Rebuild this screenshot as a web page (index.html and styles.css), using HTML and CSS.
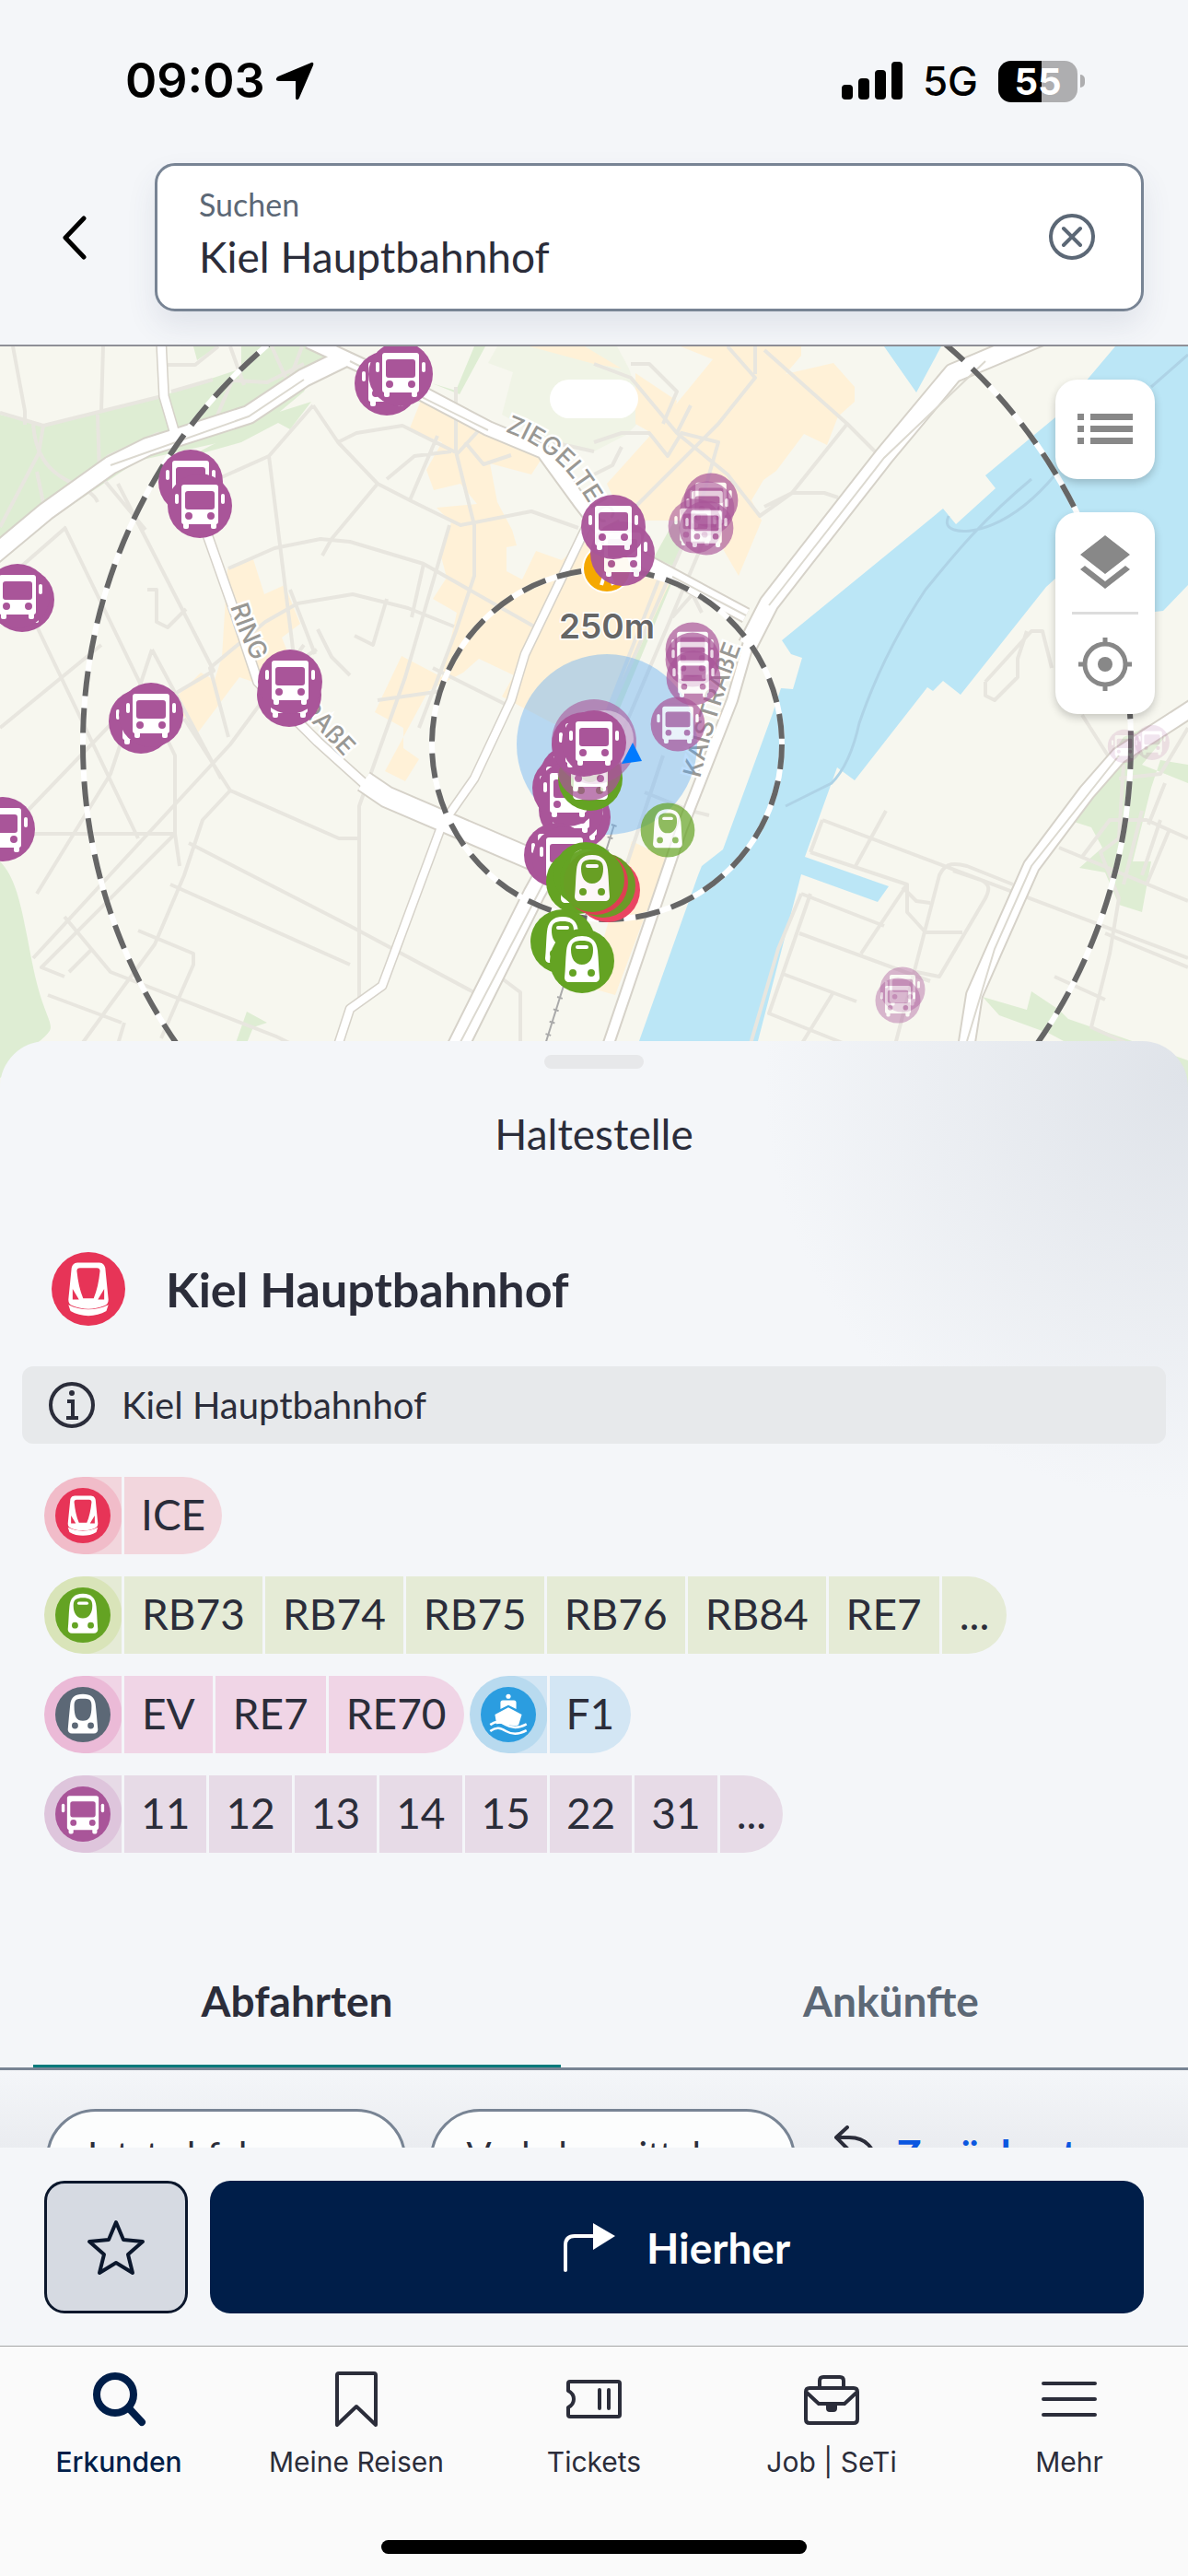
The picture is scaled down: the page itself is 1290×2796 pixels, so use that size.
FILE: index.html
```html
<!DOCTYPE html>
<html lang="de">
<head>
    <meta charset="UTF-8">
    <meta name="viewport" content="width=device-width, initial-scale=1.0">
    <title>Kiel Hauptbahnhof</title>
    <link rel="stylesheet" href="styles.css">
</head>
<body>
    <!-- Shared transport icons, centred on 0,0 with a radius of 35 -->
    <svg class="defs" aria-hidden="true">
        <defs>
            <g id="glyph-bus">
                <path fill-rule="evenodd" d="M-17-23h34a3 3 0 0 1 3 3v37a3 3 0 0 1-2 3v3a2 2 0 0 1-2 2h-2a2 2 0 0 1-2-2v-3h-24v3a2 2 0 0 1-2 2h-2a2 2 0 0 1-2-2v-3a3 3 0 0 1-2-3v-37a3 3 0 0 1 3-3zM-13-16a3 3 0 0 0-3 3v14a3 3 0 0 0 3 3h26a3 3 0 0 0 3-3v-14a3 3 0 0 0-3-3zM-12 7a4 4 0 1 0 0 8a4 4 0 0 0 0-8zM12 7a4 4 0 1 0 0 8a4 4 0 0 0 0-8z"/>
                <rect x="-27" y="-13" width="4" height="11" rx="2"/>
                <rect x="23" y="-13" width="4" height="11" rx="2"/>
            </g>
            <g id="glyph-train">
                <path fill-rule="evenodd" d="M0-27c11 0 16 6 17 16c1 9 1 20 2 29c0 3-2 5-5 5h-28c-3 0-5-2-5-5c1-9 1-20 2-29c1-10 6-16 17-16zM0-22c-8 0-12 2-12 10c0 9 4 16 12 16s12-7 12-16c0-8-4-10-12-10zM-10 9a4 4 0 1 0 0 8a4 4 0 0 0 0-8zM10 9a4 4 0 1 0 0 8a4 4 0 0 0 0-8z"/>
                <rect x="-7" y="-17" width="14" height="4" rx="2"/>
            </g>
            <g id="glyph-rail">
                <path fill-rule="evenodd" d="M0-26c10 0 15 4 16 13c1 9 2 21 3 32c0 3-2 5-5 5h-28c-3 0-5-2-5-5c1-11 2-23 3-32c1-9 6-13 16-13zM0-20c-9 0-11 2-11 9c0 14 3 19 11 19s11-5 11-19c0-7-2-9-11-9zM-10 10a4 4 0 1 0 0 8a4 4 0 0 0 0-8zM10 10a4 4 0 1 0 0 8a4 4 0 0 0 0-8z"/>
            </g>
            <g id="glyph-ice">
                <path fill-rule="evenodd" d="M-9-25h18c4 0 6 1 7 5l3 30c0 3-1 5-4 6c-10 4-20 4-30 0c-3-1-4-3-4-6l3-30c1-4 3-5 7-5zM-8-20c-2 0-3 1-3 3c1 10 3 19 6 26h10c3-7 5-16 6-26c0-2-1-3-3-3zM-15 0v10h6zM15 0v10h-6z"/>
                <path d="M-19 15c12 6 26 6 38 0l-2 6c-10 6-24 6-34 0z"/>
            </g>
            <g id="glyph-ferry">
                <circle cx="0" cy="-23" r="3"/>
                <path d="M-10-7v-8a3 3 0 0 1 3-3h14a3 3 0 0 1 3 3v8l-10-5zM0-9l17 9l-4 13c-9 4-18-4-28-1l-2-12z"/>
                <path d="M-23 13c8-6 13-4 20 0s15 5 26-1M-23 21c8-6 13-4 20 0s15 5 26-1" fill="none" stroke="#fff" stroke-width="3"/>
            </g>
            <g id="m-bus"><circle r="35" fill="#a95599"/><use href="#glyph-bus" fill="#fff"/></g>
            <g id="m-train"><circle r="35" fill="#64a323"/><use href="#glyph-train" fill="#fff"/></g>
            <g id="m-rail"><circle r="35" fill="#5c6876"/><use href="#glyph-rail" fill="#fff"/></g>
            <g id="m-ice"><circle r="35" fill="#e73457"/><use href="#glyph-ice" fill="#fff"/></g>
            <g id="m-ferry"><circle r="35" fill="#2b9de0"/><use href="#glyph-ferry" fill="#fff"/></g>
        </defs>
    </svg>

    <div class="app">
        <header class="header">
            <div class="status">
                <div class="status-left">
                    <span class="time">09:03</span>
                    <svg width="44" height="44" viewBox="0 0 44 44"><path d="M40 2c2-1 3 1 2 3L27 40c-1 3-4 3-4 0V22H5c-4 0-4-3-1-5z"/></svg>
                </div>
                <div class="status-right">
                    <svg width="66" height="42" viewBox="0 0 66 42">
                        <rect x="0" y="25" width="12" height="16" rx="4"/>
                        <rect x="18" y="18" width="12" height="23" rx="4"/>
                        <rect x="36" y="9" width="12" height="32" rx="4"/>
                        <rect x="54" y="0" width="12" height="41" rx="4"/>
                    </svg>
                    <span class="network">5G</span>
                    <span class="battery">55</span>
                </div>
            </div>
            <form class="search-row">
                <button class="back" type="button" aria-label="Zurück">
                    <svg width="30" height="50" viewBox="0 0 30 50"><path d="M25 4L5 25l20 21" fill="none" stroke="#000" stroke-width="5" stroke-linecap="round" stroke-linejoin="round"/></svg>
                </button>
                <div class="search-box">
                    <div class="search-field">
                        <label for="search">Suchen</label>
                        <input id="search" type="text" value="Kiel Hauptbahnhof">
                    </div>
                    <button class="clear" type="button" aria-label="Löschen">
                        <svg width="52" height="52" viewBox="0 0 52 52" fill="none" stroke="#5c6876" stroke-width="4" stroke-linecap="round"><circle cx="26" cy="26" r="23"/><path d="M17 17l18 18M35 17L17 35"/></svg>
                    </button>
                </div>
            </form>
        </header>

        <main class="map">
            <svg class="map-canvas" viewBox="0 376 1290 804" preserveAspectRatio="xMidYMin slice">
                <rect x="0" y="376" width="1290" height="804" fill="#f7f7ef"/>

                <!-- parks -->
                <g fill="#deedd3">
                    <path d="M0 450L47 462L176 430L232 410L262 400V376H370L345 395L330 425L300 450L240 480L150 500L0 600z"/>
                    <path d="M338 436L315 466L302 459L262 480L205 496L240 478L300 448zM210 376h26l-22 15zM515 376h12l-28 52l-30-12l26 8zM773 485l30 18l-30 50l-25-5zM735 560l12 10l-15 45l-22-10zM725 625l6 4L660 800l-8-4z"/>
                    <path d="M0 935c20 20 25 60 35 110s20 60 20 70s-25 20-20 30L0 1170zM268 1098l22 12l-15 5l-7 17h-12z"/>
                    <path d="M1290 770L1240 830L1290 850v-20l-30-5l-10 30l-20 80h20l-10 55l-25-8l-15-35l-28-5l25-22l-12-22l-25-8l60-90zM1067 1082l48 14l5-20l30 20l10 10l130 45v30L1180 1130h-25l-15-8l-55-20z"/>
                </g>
                <path d="M530 394L557 404L545 450L600 480L645 490L680 472L700 452L683 400L670 376H540z" fill="#f0f4e6"/>

                <!-- built-up blocks -->
                <g fill="#fff1d7">
                    <path d="M457 435L444 467L480 480L463 510L471 532L500 525L518 547L474 551L490 567L478 600L485 627L470 650L496 665L480 735L436 712L407 773L438 790V812L455 824L440 848L418 837L465 750L503 730L520 715L558 733L545 756L600 785L650 800L727 633L690 600L640 580L610 608L582 598L567 629L550 620V594L561 592L556 575L540 545L532 503L577 515L590 495L550 478L495 450z"/>
                    <path d="M575 376h60l40 24l-30-5zM752 376h118v10l-17 20l52-12l23 26v16l-18 16l-12 31l-25-12l-30 40l-14 10l-13 22l11 22l-25 60l-35-60l-90 0l-18-40l45-50l25-30l45-55l-50-20l-4-28l20 6zM690 405l45 30l-10 45l-35-20z"/>
                    <path d="M247 617l28-10l12 38l22-10l17 42l-20 15l14 35l-25 20l-35-12l-45 60l-22-25v-15l25-25l15 8l8-25z"/>
                    <path d="M686 913l38 18L668 1080l-28-8zM620 690l50 10l-30 60l-20-20z"/>
                </g>

                <!-- water -->
                <path fill="#bbe6f6" d="M960 376h62l-27 50zM1211 376h79v259l-27 28l-9 1l-50-40l-58 4l-10 9l-93 117l-19-15l-11 11l-6-4L928 847l-19-14l-35 97l91 32l-12 17l-83-30L810 1180H680L694 1130L758 950l4-10l23-18l53-145l10-30l13 1l10-34l-12-4l-10-15L1024 552l14 17l43-39l-11-14l76-63z"/>
                <path d="M1290 385l-40 35M1146 515c-50 60-95 65-110 60c-10-3-8-10-6-15M1120 520c-60 50-90 90-115 120c-40 60-60 110-72 145c-10 45-25 60-30 65l-50 25" fill="none" stroke="#aed3e6" stroke-width="3"/>

                <!-- minor streets -->
                <g class="street">
                    <path d="M14 376l13 70v15M112 376l-2 70M0 448l47 14L176 430M182 396h30l25-20M250 376l15 42M106 450l2 65l50 60M47 462l-5 30l-42 80M36 460c5 70 60 60 70 85M50 560l-10-48M48 555l70-60l55-25M186 425l45-13M230 465l22-52l38 2l40-20M295 376l18 40l-15 22M313 416l15-40"/>
                    <path d="M128 525L232 728L178 760M70 572L190 820V905L45 1050L70 1060M40 680L150 910M72 572L0 635M340 440L292 495L320 720L344 705M292 495L225 525M340 440L367 480L410 525L445 543L500 570L577 555L628 573M367 480l20-10l50-8l60 30l23-25M445 543l30-70M410 525l-50 60l-10 18M248 617l50-22l50-10l32 3L460 612L580 680M488 570L440 735L390 875V1083M460 612L447 670M248 800l-20-75l60-50l35-20l60-10l60 15l50 20M315 640l27 70M420 650l-15 50l-20-10M160 640h10v35l12 6l20-20M345 683l15 30l20 20M490 490l-40 5l-30 25M495 420v70l20 80v55l-20 60L455 790M470 725l80 40M600 480L645 490M505 480l20 24l30-10"/>
                    <path d="M36 1040L250 808L330 700M0 790L110 700M30 880L155 750M40 970L120 840L165 705M165 705L240 845M200 780L250 858L368 910h22M250 858L220 890L200 950L168 1025L120 1090L55 1180M205 915L380 1005L520 1080M185 960L380 1047M150 1010l60 25v12l-35 80M70 995l50 60l180 70l50 25M52 1080l80 30M135 1110l-12 40M75 1055L100 1030M545 1062l20 15v60M195 940L190 905L0 905M410 760L480 750"/>
                    <path d="M645 395l40 15L735 470L790 515L825 560L860 535L920 460L830 380M790 376L820 410L780 460L690 550L645 640M685 395h20l30 30l-15 35M735 470l15-30M920 460l30 30M830 550l30-15h35l15 5M820 376v30M645 480l30-10h30l20 25l15-25l40 10l-20 70L650 800M715 630L625 860M780 550L665 820M730 670l22-25l10 20M645 515l20-10l10-20"/>
                    <path d="M700 860l50 20M750 880l20 5M720 820l-60 180M893 890L1290 1040M893 890L880 925M880 925L985 960L935 1035M962 880l-33 60M1100 960L1050 940c-20-5-25 0-30 10L960 1180M1035 945l30 10c10 5 10 10 5 20l-50 85l-25-5M870 970l90 35M880 970L835 1100L960 1150M868 1013L1010 1065M905 1077L860 1150M850 1057l80 30M870 970l-25 60l-35 120M985 960v30l20 22h40M980 963l15 15l15 2M1070 740l50-55h12l10 40M1070 740v15l10 5l25-25v-20l10-30M1150 920L1290 978M1175 930l30-40h40l45 20M1220 830l-5 80l-20 15l20 50l-10 60l-20 80l100 45M1240 880L1220 960M1270 900L1245 960M1260 890l-20 60M1200 1013L1290 1050M1145 1060l55 25M1265 850l-18 45M1175 776l35 55M1290 790l-30 50l-45 5"/>
                </g>

                <!-- main roads -->
                <g class="road-case">
                    <path d="M-10 605L50 555L120 505L160 485L270 450L330 410L375 388" stroke-width="22"/>
                    <path d="M335 370L378 390L460 428L530 465L590 490L630 545L665 590L810 668" stroke-width="18"/>
                    <path d="M175 370L178 430L192 478M225 580L255 665L280 740L345 805L395 850" stroke-width="12"/>
                    <path d="M395 848L420 865L590 938" stroke-width="25"/>
                    <path d="M640 565L570 710L555 760L515 845L480 895L415 1070L380 1095L362 1150" stroke-width="11"/>
                    <path d="M1130 365L1035 405L960 495L870 610L835 655L812 700" stroke-width="23"/>
                    <path d="M815 690L795 760L740 900L655 1150" stroke-width="14"/>
                    <path d="M605 925L580 970L485 1160" stroke-width="25"/>
                    <path d="M1300 765L1215 820L1180 860L1120 940L1080 1030L1058 1080L1047 1150" stroke-width="20"/>
                </g>
                <g class="road">
                    <path d="M-10 605L50 555L120 505L160 485L270 450L330 410L375 388" stroke-width="18"/>
                    <path d="M335 370L378 390L460 428L530 465L590 490L630 545L665 590L810 668" stroke-width="14"/>
                    <path d="M175 370L178 430L192 478M225 580L255 665L280 740L345 805L395 850" stroke-width="9"/>
                    <path d="M395 848L420 865L590 938" stroke-width="21"/>
                    <path d="M640 565L570 710L555 760L515 845L480 895L415 1070L380 1095L362 1150" stroke-width="8"/>
                    <path d="M1130 365L1035 405L960 495L870 610L835 655L812 700" stroke-width="19"/>
                    <path d="M815 690L795 760L740 900L655 1150" stroke-width="10"/>
                    <path d="M605 925L580 970L485 1160" stroke-width="21"/>
                    <path d="M1300 765L1215 820L1180 860L1120 940L1080 1030L1058 1080L1047 1150" stroke-width="16"/>
                </g>
                <g class="road-mid">
                    <path d="M120 505L270 452L330 412M380 392L530 467M730 626L810 668M1070 392L960 497L835 657M600 940L490 1150M1215 820L1120 940L1080 1030L1050 1130"/>
                </g>
                <path d="M667 895L590 1140" fill="none" stroke="#aaa" stroke-width="2"/>
                <path d="M667 895L590 1140" fill="none" stroke="#aaa" stroke-width="6" stroke-dasharray="2 12"/>

                <!-- street names -->
                <path id="p-ziegel" d="M548 468Q596 486 620 518T668 600" fill="none"/>
                <path id="p-ring" d="M250 658Q270 722 300 748T374 822" fill="none"/>
                <path id="p-kai" d="M760 845Q786 740 826 650" fill="none"/>
                <g class="street-name">
                    <text><textPath href="#p-ziegel">ZIEGELTEICH</textPath></text>
                    <text><textPath href="#p-ring">RING</textPath></text>
                    <text text-anchor="end"><textPath href="#p-ring" startOffset="100%">STRAßE</textPath></text>
                    <text><textPath href="#p-kai">KAISTRAßE</textPath></text>
                </g>

                <!-- own position and walking radius -->
                <circle cx="659" cy="808" r="98" fill="#5aa9f6" fill-opacity=".4"/>
                <g fill="none">
                    <circle cx="659" cy="808" r="190" stroke="#fff" stroke-width="6"/>
                    <circle cx="659" cy="808" r="569" stroke="#fff" stroke-width="6"/>
                    <circle cx="659" cy="808" r="190" stroke="#666" stroke-width="6" stroke-dasharray="27 13"/>
                    <circle cx="659" cy="808" r="569" stroke="#666" stroke-width="6" stroke-dasharray="27 13"/>
                </g>
                <text x="659" y="693" text-anchor="middle" class="radius-label">250m</text>

                <!-- stops -->
                <use href="#m-bus" x="420" y="416"/>
                <use href="#m-bus" x="435" y="406"/>
                <use href="#m-bus" x="207" y="523"/>
                <use href="#m-bus" x="217" y="549"/>
                <use href="#m-bus" x="24" y="651"/>
                <use href="#m-bus" x="19" y="647"/>
                <use href="#m-bus" x="314" y="754"/>
                <use href="#m-bus" x="315" y="740"/>
                <use href="#m-bus" x="153" y="783"/>
                <use href="#m-bus" x="164" y="776"/>
                <use href="#m-bus" x="3" y="900"/>
                <circle cx="659" cy="617" r="26" fill="#f5a800" stroke="#fff" stroke-width="2"/>
                <path d="M657 622l-4 13M661 622l5 13" stroke="#fff" stroke-width="4"/>
                <use href="#m-bus" x="676" y="601" opacity=".95"/>
                <use href="#m-bus" x="666" y="572" opacity=".95"/>
                <use href="#m-bus" transform="translate(772 543) scale(.84)" opacity=".7"/>
                <use href="#m-bus" transform="translate(768 552) scale(.84)" opacity=".6"/>
                <use href="#m-bus" transform="translate(755 571) scale(.84)" opacity=".6"/>
                <use href="#m-bus" transform="translate(767 573) scale(.84)" opacity=".65"/>
                <use href="#m-bus" transform="translate(752 705) scale(.84)" opacity=".7"/>
                <use href="#m-bus" transform="translate(752 716) scale(.84)" opacity=".7"/>
                <use href="#m-bus" transform="translate(753 736) scale(.84)" opacity=".7"/>
                <use href="#m-bus" transform="translate(736 786) scale(.84)" opacity=".7"/>
                <use href="#m-train" transform="translate(725 901) scale(.84)" opacity=".7"/>
                <use href="#m-bus" transform="translate(980 1074) scale(.7)" opacity=".4"/>
                <use href="#m-bus" transform="translate(975 1086) scale(.7)" opacity=".4"/>
                <use href="#m-bus" transform="translate(1221 810) scale(.52)" opacity=".15"/>
                <use href="#m-bus" transform="translate(1251 806) scale(.54)" opacity=".15"/>

                <!-- cluster around the station -->
                <use href="#m-bus" x="621" y="843"/>
                <use href="#m-bus" x="613" y="855"/>
                <use href="#m-bus" x="628" y="887"/>
                <use href="#m-bus" x="620" y="879"/>
                <use href="#m-bus" x="617" y="862"/>
                <use href="#m-bus" x="604" y="928"/>
                <use href="#m-bus" x="613" y="932"/>
                <use href="#m-train" x="641" y="845"/>
                <circle cx="645" cy="805" r="46" fill="#a95599" opacity=".6"/>
                <circle cx="657" cy="802" r="31" fill="#fff" opacity=".4"/>
                <path d="M687 806l10 20l-22 3z" fill="#007aff"/>
                <use href="#m-bus" x="640" y="834" opacity=".75"/>
                <use href="#m-bus" x="634" y="808"/>
                <use href="#m-bus" x="645" y="806"/>
                <use href="#m-train" x="628" y="957"/>
                <use href="#m-train" x="636" y="949"/>
                <circle cx="660" cy="966" r="35" fill="#ea4562"/>
                <circle cx="655" cy="961" r="35" fill="#6c9a28"/>
                <circle cx="647" cy="958" r="35" fill="#dd3f52"/>
                <use href="#m-train" x="643" y="955" opacity=".96"/>
                <use href="#m-train" x="611" y="1022"/>
                <use href="#m-train" x="632" y="1043"/>
            </svg>

            <div class="map-pill"></div>
            <div class="map-tools">
                <div class="tool-card">
                    <button type="button" aria-label="Liste">
                        <svg width="60" height="34" viewBox="0 0 60 34" fill="#888"><path d="M0 0h7v7H0zM14 0h46v7H14zM0 13h7v7H0zM14 13h46v7H14zM0 26h7v7H0zM14 26h46v7H14z"/></svg>
                    </button>
                </div>
                <div class="tool-card">
                    <button type="button" aria-label="Ebenen">
                        <svg width="56" height="58" viewBox="0 0 56 58" fill="#888"><path d="M28 0l27 21l-27 21L1 21zM28 50l22-17l5 4l-27 21L1 37l5-4z"/></svg>
                    </button>
                    <hr>
                    <button type="button" aria-label="Standort">
                        <svg width="58" height="58" viewBox="0 0 58 58" fill="none" stroke="#888" stroke-width="5"><circle cx="29" cy="29" r="22"/><circle cx="29" cy="29" r="8" fill="#888" stroke="none"/><path d="M29 0v8M29 50v8M0 29h8M50 29h8"/></svg>
                    </button>
                </div>
            </div>
        </main>

        <section class="sheet">
            <div class="handle"></div>
            <h1>Haltestelle</h1>
            <div class="station">
                <svg width="80" height="80" viewBox="-35 -35 70 70"><use href="#m-ice"/></svg>
                <h2>Kiel Hauptbahnhof</h2>
            </div>
            <div class="info">
                <svg width="50" height="50" viewBox="0 0 50 50" fill="none" stroke="#2b2d3a" stroke-width="4"><circle cx="25" cy="25" r="23"/><path d="M20 21h6v18M19 39h13"/><circle cx="25" cy="12" r="3" fill="#2b2d3a" stroke="none"/></svg>
                <span>Kiel Hauptbahnhof</span>
            </div>

            <div class="lines">
                <div class="line-row">
                    <ul class="line ice">
                        <li class="line-icon"><svg viewBox="-35 -35 70 70"><use href="#m-ice"/></svg></li>
                        <li>ICE</li>
                    </ul>
                </div>
                <div class="line-row">
                    <ul class="line train">
                        <li class="line-icon"><svg viewBox="-35 -35 70 70"><use href="#m-train"/></svg></li>
                        <li>RB73</li>
                        <li>RB74</li>
                        <li>RB75</li>
                        <li>RB76</li>
                        <li>RB84</li>
                        <li>RE7</li>
                        <li>...</li>
                    </ul>
                </div>
                <div class="line-row">
                    <ul class="line rail">
                        <li class="line-icon"><svg viewBox="-35 -35 70 70"><use href="#m-rail"/></svg></li>
                        <li>EV</li>
                        <li>RE7</li>
                        <li>RE70</li>
                    </ul>
                    <ul class="line ferry">
                        <li class="line-icon"><svg viewBox="-35 -35 70 70"><use href="#m-ferry"/></svg></li>
                        <li>F1</li>
                    </ul>
                </div>
                <div class="line-row">
                    <ul class="line bus">
                        <li class="line-icon"><svg viewBox="-35 -35 70 70"><use href="#m-bus"/></svg></li>
                        <li>11</li>
                        <li>12</li>
                        <li>13</li>
                        <li>14</li>
                        <li>15</li>
                        <li>22</li>
                        <li>31</li>
                        <li>...</li>
                    </ul>
                </div>
            </div>

            <div class="tabs">
                <button class="tab active" type="button">Abfahrten</button>
                <button class="tab" type="button">Ankünfte</button>
            </div>

            <div class="filters">
                <button class="filter" type="button">Jetzt abfahren</button>
                <button class="filter" type="button">Verkehrsmittel</button>
                <a class="reset" href="#">
                    <svg width="52" height="72" viewBox="0 0 52 72" fill="none" stroke="#2b2d3a" stroke-width="4" stroke-linecap="round"><path d="M14 2L2 13l12 12M2 13h14c18 0 28 10 32 36"/></svg>
                    <span>Zurücksetzen</span>
                </a>
            </div>
        </section>

        <div class="actions">
            <button class="favorite" type="button" aria-label="Favorit">
                <svg width="64" height="62" viewBox="0 0 64 62" fill="none" stroke="#0b172c" stroke-width="4" stroke-linejoin="round"><path d="M32 4l8 19l21 2l-16 14l5 20l-18-11l-18 11l5-20L3 25l21-2z"/></svg>
            </button>
            <button class="route" type="button">
                <svg width="56" height="54" viewBox="0 0 56 54"><path d="M2 52V25q0-10 10-10h22" fill="none" stroke="#fff" stroke-width="4" stroke-linecap="round"/><path d="M32 1l24 14l-24 15z" fill="#fff"/></svg>
                Hierher
            </button>
        </div>

        <nav class="nav">
            <div class="nav-items">
                <a class="active" href="#">
                    <svg viewBox="0 0 64 64"><circle cx="28" cy="27" r="20"/><path d="M43 42l14 15"/></svg>
                    Erkunden
                </a>
                <a href="#">
                    <svg viewBox="0 0 64 64"><path d="M13 4h38q2 0 2 2v54L32 40L11 60V6q0-2 2-2z"/></svg>
                    Meine Reisen
                </a>
                <a href="#">
                    <svg viewBox="0 0 64 64"><path d="M6 13h52q2 0 2 2v34q0 2-2 2H6q-2 0-2-2v-8c8-4 8-14 0-18v-8q0-2 2-2zM38 22v20M48 22v20"/></svg>
                    Tickets
                </a>
                <a href="#">
                    <svg viewBox="0 0 64 64"><path d="M8 20h48q4 0 4 4v30q0 4-4 4H8q-4 0-4-4V24q0-4 4-4zM19 20v-8q0-4 4-4h18q4 0 4 4v8M4 24l14 13h28l14-13"/><rect x="28" y="37" width="8" height="7" rx="2" fill="#2b2d3a"/></svg>
                    Job | SeTi
                </a>
                <a href="#">
                    <svg viewBox="0 0 64 64"><path d="M4 15h56M4 32h56M4 49h56"/></svg>
                    Mehr
                </a>
            </div>
            <div class="home-bar"></div>
        </nav>
    </div>
</body>
</html>
```

FILE: styles.css
```css
* {
    box-sizing: border-box;
}
body {
    margin: 0;
    background: #f4f6f9;
    color: #2b2d3a;
    font-family: Lato, "Open Sans", sans-serif;
    font-size: 46px;
}
button, input {
    font: inherit;
    color: inherit;
    border: none;
    background: none;
    padding: 0;
    margin: 0;
}
button {
    cursor: pointer;
}
a {
    color: inherit;
    text-decoration: none;
}
svg {
    display: block;
    flex-shrink: 0;
}
.defs {
    position: absolute;
    width: 0;
    height: 0;
}
.app {
    display: flex;
    flex-direction: column;
    height: 100vh;
}

/* status bar and search */
.header {
    border-bottom: 2px solid #8f9097;
}
.status {
    display: flex;
    justify-content: space-between;
    align-items: center;
    padding: 58px 120px 52px 136px;
    color: #000;
    font-family: Inter, sans-serif;
    line-height: 60px;
}
.status-left, .status-right {
    display: flex;
    align-items: center;
}
.status-left {
    gap: 10px;
}
.status-right {
    gap: 22px;
}
.time {
    font-size: 52px;
    font-weight: 600;
}
.network {
    font-size: 44px;
    font-weight: 500;
}
.battery {
    position: relative;
    width: 86px;
    height: 45px;
    border-radius: 14px;
    background: linear-gradient(90deg, #000 55%, #aeaeb0 55%);
    color: #fff;
    font-size: 40px;
    font-weight: 700;
    line-height: 45px;
    text-align: center;
}
.battery::after {
    content: "";
    position: absolute;
    top: 15px;
    right: -8px;
    width: 5px;
    height: 14px;
    border-radius: 0 5px 5px 0;
    background: #aeaeb0;
}
.search-row {
    display: flex;
    align-items: center;
    padding: 7px 48px 36px 66px;
    gap: 72px;
}
.search-box {
    display: flex;
    flex: 1;
    align-items: center;
    justify-content: space-between;
    padding: 20px 49px 21px 45px;
    border: 3px solid #788494;
    border-radius: 22px;
    background: #fff;
    box-shadow: 0 16px 32px rgba(60, 70, 110, 0.1);
}
.search-field {
    flex: 1;
}
.search-field label {
    display: block;
    color: #5c6876;
    font-size: 34px;
    line-height: 44px;
}
.search-field input {
    display: block;
    width: 100%;
    height: 70px;
    line-height: 70px;
    outline: none;
}

/* map */
.map {
    position: relative;
    flex: 0 0 804px;
}
.map-canvas {
    width: 100%;
    height: 100%;
}
.street {
    fill: none;
    stroke: #e8e6df;
    stroke-width: 4;
    stroke-linejoin: round;
}
.road-case {
    fill: none;
    stroke: #d6d2c9;
    stroke-linejoin: round;
}
.road {
    fill: none;
    stroke: #fff;
    stroke-linejoin: round;
}
.road-mid {
    fill: none;
    stroke: #dcd9d0;
    stroke-width: 2;
}
.street-name {
    fill: #999894;
    stroke: #fff;
    stroke-width: 5;
    paint-order: stroke;
    font-family: Inter, sans-serif;
    font-size: 27px;
    font-weight: 500;
}
.radius-label {
    fill: #666;
    stroke: #fff;
    stroke-width: 3;
    paint-order: stroke;
    font-family: Inter, sans-serif;
    font-size: 37px;
    font-weight: 600;
}
.map-pill {
    position: absolute;
    top: 36px;
    left: 50%;
    width: 96px;
    height: 42px;
    border-radius: 21px;
    background: #fff;
    transform: translateX(-50%);
}
.map-tools {
    position: absolute;
    top: 36px;
    right: 36px;
    display: flex;
    flex-direction: column;
    gap: 36px;
}
.tool-card {
    width: 108px;
    border-radius: 24px;
    background: #fff;
    box-shadow: 0 4px 10px rgba(0, 0, 0, 0.2);
}
.tool-card button {
    display: flex;
    align-items: center;
    justify-content: center;
    width: 100%;
    height: 108px;
}
.tool-card hr {
    margin: 0 18px;
    border: none;
    border-top: 3px solid #ddd;
}

/* bottom sheet */
.sheet {
    position: relative;
    flex: 1;
    min-height: 0;
    margin-top: -50px;
    overflow: hidden;
    border-radius: 50px 50px 0 0;
    background: radial-gradient(circle 460px at 100% 40px, #dfe3e9, rgba(223, 227, 233, 0)), #f4f6f9;
}
.handle {
    width: 108px;
    height: 15px;
    margin: 15px auto 41px;
    border-radius: 8px;
    background: #e7e8ea;
}
.sheet h1 {
    margin: 0;
    font-size: 46px;
    font-weight: 400;
    line-height: 60px;
    text-align: center;
}
.station {
    display: flex;
    align-items: center;
    gap: 44px;
    margin: 98px 56px 44px;
}
.station h2 {
    margin: 0;
    font-size: 52px;
    font-weight: 700;
    line-height: 60px;
}
.info {
    display: flex;
    align-items: center;
    gap: 29px;
    margin: 0 24px;
    padding: 17px 29px;
    border-radius: 12px;
    background: #e7e9eb;
    font-size: 40px;
    line-height: 50px;
}
.lines {
    display: flex;
    flex-direction: column;
    gap: 24px;
    margin: 36px 48px 100px;
}
.line-row {
    display: flex;
    gap: 6px;
}
.line {
    display: flex;
    gap: 3px;
    margin: 0;
    padding: 0;
    list-style: none;
    border-radius: 42px;
    overflow: hidden;
}
.line li {
    padding: 0 18px 2px;
    background: var(--light);
    line-height: 82px;
}
.train li, .rail li {
    padding: 0 19px 2px;
}
.line .line-icon {
    padding: 12px;
    background: radial-gradient(circle, var(--ring) 42px, var(--light) 43px);
}
.line-icon svg {
    width: 60px;
    height: 60px;
}
.ice {
    --light: #f2d6dd;
    --ring: #f1bcc9;
}
.train {
    --light: #e5ebd6;
    --ring: #d9e4b9;
}
.rail {
    --light: #f0d5e6;
    --ring: #ebbad7;
}
.ferry {
    --light: #d3e6f4;
    --ring: #b8daef;
}
.bus {
    --light: #e7dbe7;
    --ring: #dec5dc;
}
.tabs {
    display: grid;
    grid-template-columns: 1fr 1fr;
    column-gap: 72px;
    padding: 0 36px;
    border-bottom: 3px solid #788494;
}
.tab {
    padding: 31px 0 39px;
    border-bottom: 3px solid transparent;
    color: #5c6876;
    font-weight: 700;
    line-height: 60px;
}
.tab.active {
    border-color: #007a7c;
    color: #2b2d3a;
}
.filters {
    display: flex;
    align-items: center;
    gap: 26px;
    padding: 42px 50px 0;
    white-space: nowrap;
    background: linear-gradient(#f4f6f9, #eaecf0 84px);
}
.filter {
    height: 108px;
    padding: 0 100px 8px 36px;
    border: 3px solid #788494;
    border-radius: 54px;
    background: #fcfdfd;
    font-size: 40px;
}
.reset {
    display: flex;
    align-items: center;
    gap: 16px;
    padding-left: 16px;
    color: #0b57e0;
    font-size: 44px;
    font-weight: 700;
}
.reset span {
    padding-bottom: 10px;
}

/* actions */
.actions {
    display: flex;
    gap: 24px;
    padding: 36px 48px 35px;
}
.favorite, .route {
    display: flex;
    align-items: center;
    justify-content: center;
    height: 144px;
    border-radius: 22px;
}
.favorite {
    width: 156px;
    border: 3px solid #0b172c;
    background: #d6dae2;
}
.route {
    flex: 1;
    gap: 34px;
    background: #001e49;
    color: #fff;
    font-weight: 700;
}

/* bottom navigation */
.nav {
    border-top: 1px solid #a5a5a5;
    background: #fafafa;
}
.nav-items {
    display: grid;
    grid-template-columns: repeat(5, 1fr);
    padding: 25px 0 65px;
}
.nav-items a {
    display: flex;
    flex-direction: column;
    align-items: center;
    gap: 16px;
    font-family: Inter, sans-serif;
    font-size: 30px;
    line-height: 40px;
    white-space: nowrap;
}
.nav-items svg {
    width: 64px;
    height: 64px;
    fill: none;
    stroke: #2b2d3a;
    stroke-width: 4;
    stroke-linecap: round;
    stroke-linejoin: round;
}
.nav-items .active {
    color: #001e49;
    font-weight: 500;
}
.nav-items .active svg {
    stroke: #001e49;
    stroke-width: 8;
}
.home-bar {
    width: 462px;
    height: 15px;
    margin: 0 auto 24px;
    border-radius: 8px;
    background: #000;
}
```
